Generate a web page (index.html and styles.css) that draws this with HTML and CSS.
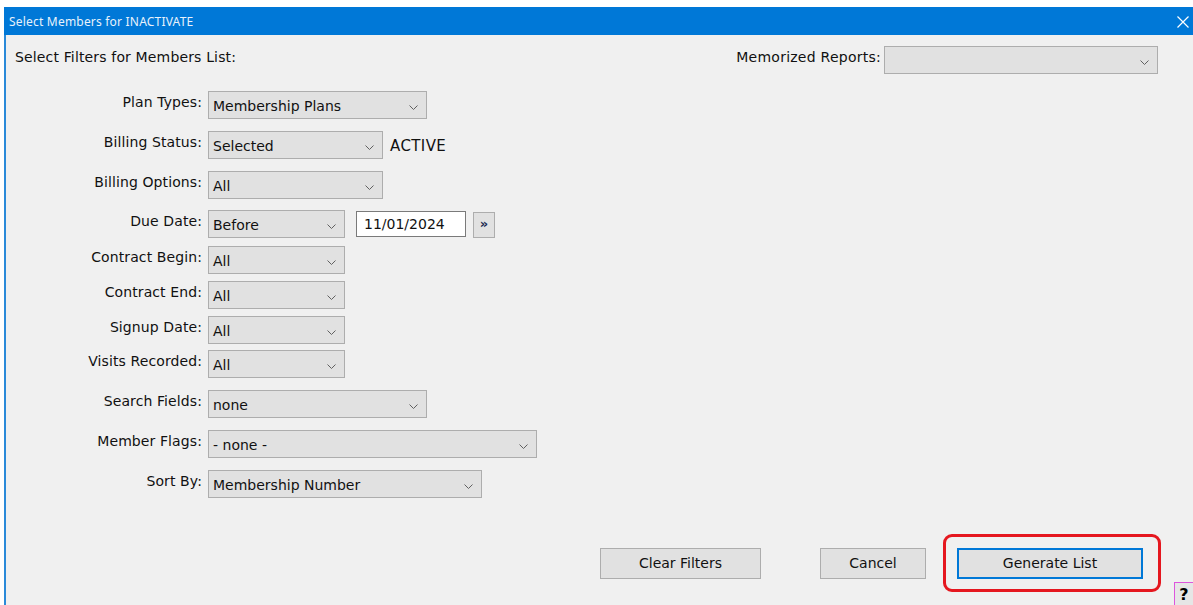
FILE: index.html
```html
<!DOCTYPE html>
<html lang="en">
<head>
<meta charset="utf-8">
<title>Select Members for INACTIVATE</title>
<link rel="stylesheet" href="styles.css">
</head>
<body>
<div class="window">
  <div class="titlebar">
    <span class="title">Select Members for INACTIVATE</span>
    <svg class="close" width="12" height="12" viewBox="0 0 12 12"><path d="M0.5 0.5 L11.5 11.5 M11.5 0.5 L0.5 11.5" stroke="#fff" stroke-width="1.2" fill="none"/></svg>
  </div>
  <div class="content">
    <div class="top-row">
      <div class="heading">Select Filters for Members List:</div>
      <div class="memorized">
        <span class="mem-label">Memorized Reports:</span>
        <div class="combo w-mem"><span></span><svg class="chev" width="9" height="5" viewBox="0 0 9 5"><path d="M0.5 0.5 L4.5 4.5 L8.5 0.5" stroke="#606060" fill="none"/></svg></div>
      </div>
    </div>

    <div class="filters">
      <div class="row">
        <label class="lbl">Plan Types:</label>
        <div class="combo w-lg"><span>Membership Plans</span><svg class="chev" width="9" height="5" viewBox="0 0 9 5"><path d="M0.5 0.5 L4.5 4.5 L8.5 0.5" stroke="#606060" fill="none"/></svg></div>
      </div>
      <div class="row gap-l">
        <label class="lbl">Billing Status:</label>
        <div class="combo w-md"><span>Selected</span><svg class="chev" width="9" height="5" viewBox="0 0 9 5"><path d="M0.5 0.5 L4.5 4.5 L8.5 0.5" stroke="#606060" fill="none"/></svg></div>
        <span class="status">ACTIVE</span>
      </div>
      <div class="row gap-l">
        <label class="lbl">Billing Options:</label>
        <div class="combo w-md"><span>All</span><svg class="chev" width="9" height="5" viewBox="0 0 9 5"><path d="M0.5 0.5 L4.5 4.5 L8.5 0.5" stroke="#606060" fill="none"/></svg></div>
      </div>
      <div class="row gap-m">
        <label class="lbl">Due Date:</label>
        <div class="combo w-sm"><span>Before</span><svg class="chev" width="9" height="5" viewBox="0 0 9 5"><path d="M0.5 0.5 L4.5 4.5 L8.5 0.5" stroke="#606060" fill="none"/></svg></div>
        <div class="date-input">11/01/2024</div>
        <div class="picker">&raquo;</div>
      </div>
      <div class="row gap-s">
        <label class="lbl">Contract Begin:</label>
        <div class="combo w-sm"><span>All</span><svg class="chev" width="9" height="5" viewBox="0 0 9 5"><path d="M0.5 0.5 L4.5 4.5 L8.5 0.5" stroke="#606060" fill="none"/></svg></div>
      </div>
      <div class="row gap-xs">
        <label class="lbl">Contract End:</label>
        <div class="combo w-sm"><span>All</span><svg class="chev" width="9" height="5" viewBox="0 0 9 5"><path d="M0.5 0.5 L4.5 4.5 L8.5 0.5" stroke="#606060" fill="none"/></svg></div>
      </div>
      <div class="row gap-xs">
        <label class="lbl">Signup Date:</label>
        <div class="combo w-sm"><span>All</span><svg class="chev" width="9" height="5" viewBox="0 0 9 5"><path d="M0.5 0.5 L4.5 4.5 L8.5 0.5" stroke="#606060" fill="none"/></svg></div>
      </div>
      <div class="row gap-xxs">
        <label class="lbl">Visits Recorded:</label>
        <div class="combo w-sm"><span>All</span><svg class="chev" width="9" height="5" viewBox="0 0 9 5"><path d="M0.5 0.5 L4.5 4.5 L8.5 0.5" stroke="#606060" fill="none"/></svg></div>
      </div>
      <div class="row gap-l">
        <label class="lbl">Search Fields:</label>
        <div class="combo w-lg"><span>none</span><svg class="chev" width="9" height="5" viewBox="0 0 9 5"><path d="M0.5 0.5 L4.5 4.5 L8.5 0.5" stroke="#606060" fill="none"/></svg></div>
      </div>
      <div class="row gap-l">
        <label class="lbl">Member Flags:</label>
        <div class="combo w-xl"><span>- none -</span><svg class="chev" width="9" height="5" viewBox="0 0 9 5"><path d="M0.5 0.5 L4.5 4.5 L8.5 0.5" stroke="#606060" fill="none"/></svg></div>
      </div>
      <div class="row gap-l">
        <label class="lbl">Sort By:</label>
        <div class="combo w-sort"><span>Membership Number</span><svg class="chev" width="9" height="5" viewBox="0 0 9 5"><path d="M0.5 0.5 L4.5 4.5 L8.5 0.5" stroke="#606060" fill="none"/></svg></div>
      </div>
    </div>

    <div class="actions">
      <button class="btn btn-clear">Clear Filters</button>
      <button class="btn btn-cancel">Cancel</button>
      <div class="highlight">
        <button class="btn btn-generate">Generate List</button>
      </div>
    </div>

    <div class="help">?</div>
  </div>
</div>
</body>
</html>
```

FILE: styles.css
```css
html, body {
  margin: 0;
  padding: 0;
  background: #ffffff;
  width: 1193px;
  height: 605px;
  overflow: hidden;
}

body {
  font-family: "DejaVu Sans", Verdana, sans-serif;
  font-size: 14px;
  color: #111;
}

.window {
  margin: 7px 0 0 4px;
  height: 598px;
  display: flex;
  flex-direction: column;
  border-left: 2px solid #2b8ad9;
  background: #f0f0f0;
}

.titlebar {
  height: 28px;
  margin-left: -2px;
  background: #0078d7;
  display: flex;
  align-items: center;
  justify-content: space-between;
  padding: 0 4px 0 5px;
  color: #fff;
}

.title {
  font-family: "Noto Sans", "Open Sans", sans-serif;
  font-size: 12px;
  letter-spacing: 0.2px;
  color: #e8f2fb;
}

.close {
  margin-top: 2px;
}

.content {
  position: relative;
  flex: 1;
  display: flex;
  flex-direction: column;
}

.top-row {
  display: flex;
  justify-content: space-between;
  align-items: flex-start;
  padding: 11px 35px 0 9px;
}

.heading {
  line-height: 20px;
  padding-top: 1px;
  letter-spacing: 0.15px;
}

.memorized {
  display: flex;
  align-items: flex-start;
}

.mem-label {
  line-height: 20px;
  padding-top: 1px;
  margin-right: 3px;
  letter-spacing: 0.25px;
}

.filters {
  margin-top: 17px;
  display: flex;
  flex-direction: column;
}

.row {
  display: flex;
  align-items: flex-start;
}

.gap-l { margin-top: 12px; }
.gap-m { margin-top: 11px; }
.gap-s { margin-top: 8px; }
.gap-xs { margin-top: 7px; }
.gap-xxs { margin-top: 6px; }

.lbl {
  width: 196px;
  margin-right: 6px;
  text-align: right;
  line-height: 20px;
  padding-top: 1px;
  letter-spacing: 0.1px;
}

.combo {
  box-sizing: border-box;
  height: 28px;
  background: #e1e1e1;
  border: 1px solid #adadad;
  display: flex;
  justify-content: space-between;
  align-items: flex-start;
  padding: 4px 8px 0 4px;
  line-height: 20px;
}

.combo .chev {
  margin-top: 9px;
}

.w-mem { width: 274px; }
.w-lg { width: 219px; }
.w-md { width: 175px; }
.w-sm { width: 137px; }
.w-xl { width: 329px; }
.w-sort { width: 274px; }

.status {
  margin-left: 7px;
  line-height: 20px;
  padding-top: 5px;
  font-size: 15px;
  letter-spacing: 0.4px;
}

.date-input {
  box-sizing: border-box;
  margin-left: 11px;
  margin-top: 1px;
  width: 110px;
  height: 26px;
  background: #fff;
  border: 1px solid #7a7a7a;
  padding: 2px 0 0 7px;
  line-height: 20px;
}

.picker {
  box-sizing: border-box;
  margin-left: 7px;
  margin-top: 2px;
  width: 22px;
  height: 26px;
  background: #e1e1e1;
  border: 1px solid #adadad;
  text-align: center;
  line-height: 22px;
  font-size: 13px;
  font-weight: bold;
  color: #1a2a50;
}

.actions {
  margin-top: 36px;
  display: flex;
  align-items: center;
  justify-content: flex-end;
  padding-right: 32px;
}

.btn {
  box-sizing: border-box;
  height: 31px;
  background: #e1e1e1;
  border: 1px solid #adadad;
  font-family: "DejaVu Sans", Verdana, sans-serif;
  font-size: 14px;
  color: #111;
  padding: 0;
}

.btn-clear { width: 161px; }
.btn-cancel { width: 106px; margin-left: 59px; }

.highlight {
  box-sizing: border-box;
  margin-left: 17px;
  width: 218px;
  height: 58px;
  border: 3px solid #e5171f;
  border-radius: 9px;
  display: flex;
  align-items: center;
  padding: 0 0 0 11px;
}

.btn-generate {
  width: 186px;
  border: 2px solid #0078d7;
  height: 31px;
}

.help {
  position: absolute;
  right: 0;
  bottom: 0;
  box-sizing: border-box;
  width: 19px;
  height: 23px;
  border: 1px solid #dd55dd;
  border-right: none;
  border-bottom: none;
  background: #e6e6e6;
  font-weight: bold;
  font-size: 16px;
  text-align: center;
  line-height: 24px;
  color: #000;
}
```
